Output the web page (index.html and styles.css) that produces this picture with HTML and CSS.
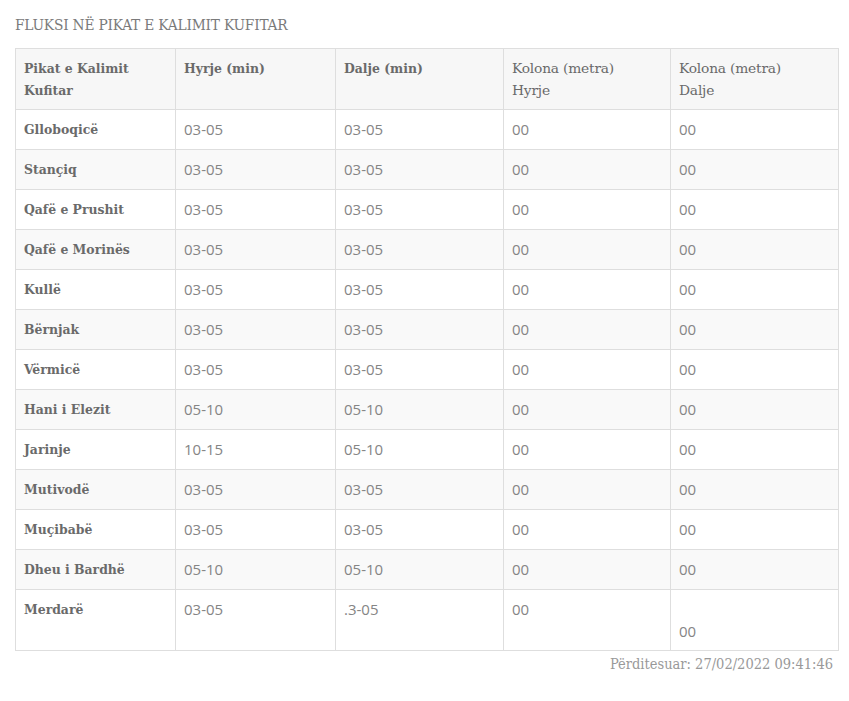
FILE: index.html
```html
<!DOCTYPE html>
<html lang="sq">
<head>
<meta charset="utf-8">
<title>Fluksi</title>
<link rel="stylesheet" href="styles.css">
</head>
<body>
<div class="wrap">
  <h2 class="title">FLUKSI NË PIKAT E KALIMIT KUFITAR</h2>
  <table class="flux">
    <thead>
      <tr><th>Pikat e Kalimit<br>Kufitar</th><th>Hyrje (min)</th><th>Dalje (min)</th><th class="light">Kolona (metra)<br>Hyrje</th><th class="light">Kolona (metra)<br>Dalje</th></tr>
    </thead>
    <tbody>
      <tr><th>Glloboqicë</th><td>03-05</td><td>03-05</td><td>00</td><td>00</td></tr>
      <tr><th>Stançiq</th><td>03-05</td><td>03-05</td><td>00</td><td>00</td></tr>
      <tr><th>Qafë e Prushit</th><td>03-05</td><td>03-05</td><td>00</td><td>00</td></tr>
      <tr><th>Qafë e Morinës</th><td>03-05</td><td>03-05</td><td>00</td><td>00</td></tr>
      <tr><th>Kullë</th><td>03-05</td><td>03-05</td><td>00</td><td>00</td></tr>
      <tr><th>Bërnjak</th><td>03-05</td><td>03-05</td><td>00</td><td>00</td></tr>
      <tr><th>Vërmicë</th><td>03-05</td><td>03-05</td><td>00</td><td>00</td></tr>
      <tr><th>Hani i Elezit</th><td>05-10</td><td>05-10</td><td>00</td><td>00</td></tr>
      <tr><th>Jarinje</th><td>10-15</td><td>05-10</td><td>00</td><td>00</td></tr>
      <tr><th>Mutivodë</th><td>03-05</td><td>03-05</td><td>00</td><td>00</td></tr>
      <tr><th>Muçibabë</th><td>03-05</td><td>03-05</td><td>00</td><td>00</td></tr>
      <tr><th>Dheu i Bardhë</th><td>05-10</td><td>05-10</td><td>00</td><td>00</td></tr>
      <tr class="tall"><th>Merdarë</th><td>03-05</td><td>.3-05</td><td>00</td><td><br>00</td></tr>
    </tbody>
  </table>
  <p class="updated">Përditesuar: 27/02/2022 09:41:46</p>
</div>
</body>
</html>
```

FILE: styles.css
```css
html, body {
  margin: 0;
  padding: 0;
  background: #ffffff;
}
.wrap {
  padding: 14px 11px 0 15px;
}
.title {
  margin: 0 0 12px 0;
  font-family: "DejaVu Serif", serif;
  font-stretch: condensed;
  font-weight: normal;
  font-size: 15.3px;
  line-height: 22px;
  color: #7a7a7a;
  letter-spacing: -0.2px;
}
.flux {
  width: 824px;
  border-collapse: collapse;
  table-layout: fixed;
}
.flux th, .flux td {
  border: 1px solid #dedede;
  padding: 8px 8px;
  line-height: 23px;
  text-align: left;
  vertical-align: top;
}
.flux thead th, .flux .tall th, .flux .tall td {
  line-height: 22px;
}
.flux th:nth-child(1), .flux td:nth-child(1) { width: 143px; }
.flux th:nth-child(2), .flux td:nth-child(2) { width: 143px; }
.flux th:nth-child(3), .flux td:nth-child(3) { width: 151px; }
.flux th:nth-child(4), .flux td:nth-child(4) { width: 150px; }
.flux th {
  font-family: "DejaVu Serif", serif;
  font-stretch: condensed;
  font-weight: bold;
  font-size: 13.8px;
  color: #6a6a6a;
}
.flux thead th.light {
  font-stretch: normal;
  font-weight: normal;
  font-size: 13.8px;
  letter-spacing: -0.2px;
}
.flux td {
  font-family: "Open Sans", sans-serif;
  font-size: 15px;
  color: #858585;
}
.flux thead tr {
  background: #f7f7f7;
}
.flux tbody tr:nth-child(even) {
  background: #f9f9f9;
}
.updated {
  margin: 2px 5px 0 0;
  text-align: right;
  font-family: "DejaVu Serif", serif;
  font-stretch: condensed;
  font-size: 14.5px;
  line-height: 22px;
  color: #999999;
}
```
